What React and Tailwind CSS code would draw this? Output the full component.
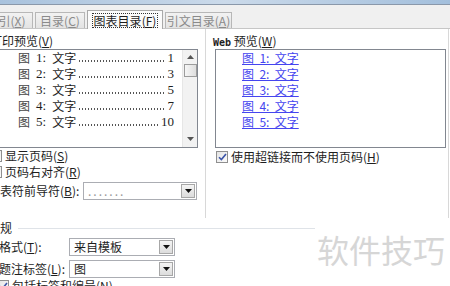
import React from "react";

const entries = [
  { n: 1, page: "1" },
  { n: 2, page: "3" },
  { n: 3, page: "5" },
  { n: 4, page: "7" },
  { n: 5, page: "10" },
];

const Key = ({ k }) => (
  <>
    (<span className="underline">{k}</span>)
  </>
);

const Check = ({ checked }) => (
  <span className="flex-none w-[12px] h-[12px] border border-[#8f8f8f] bg-gradient-to-br from-[#e4e4e4] to-[#fbfbfb] flex items-center justify-center">
    {checked && (
      <svg width="9" height="8" viewBox="0 0 9 8">
        <path d="M1 4.2 L3.4 6.6 L8 1" fill="none" stroke="#3b54a8" strokeWidth="1.6" />
      </svg>
    )}
  </span>
);

const Select = ({ value, className, dim }) => (
  <div className={`flex items-center bg-white border border-[#abadb3] ${className}`}>
    <span className={`flex-1 min-w-0 pl-[4px] leading-[14px] whitespace-nowrap ${dim ? "text-[#9a9a9a] tracking-[2px]" : ""}`}>
      {value}
    </span>
    <span className="flex-none w-[14px] h-[14px] mr-px border border-[#a7a7a7] bg-gradient-to-b from-[#f4f4f4] to-[#dcdcdc] flex items-center justify-center">
      <svg width="7" height="4" viewBox="0 0 7 4">
        <polygon points="0,0 7,0 3.5,4" fill="#111" />
      </svg>
    </span>
  </div>
);

const tabs = [
  { label: "索引", k: "X", w: "w-[54px] ml-[-21px]" },
  { label: "目录", k: "C", w: "w-[50px]" },
  { label: "图表目录", k: "F", w: "w-[76px]", active: true },
  { label: "引文目录", k: "A", w: "w-[67px]" },
];

export default function App() {
  return (
    <div className="relative w-[450px] h-[286px] overflow-hidden bg-white text-[12px] text-[#1e1e1e] font-['Noto_Sans_CJK_SC',sans-serif]">
      <div className="h-[4px] bg-gradient-to-r from-[#a8c2dd] via-[#cbdaea] to-[#a3bfdc]" />
      <div className="h-px bg-[#8a98aa]" />

      {/* tab strip */}
      <div className="h-[24px] bg-[#f0f0f0] border-b border-[#c6c6c6] flex items-end gap-[2px]">
        {tabs.map((t) =>
          t.active ? (
            <div
              key={t.k}
              className={`${t.w} flex-none h-[19px] mb-[-1px] bg-[#fbfbfb] border-x border-t border-[#a9a9a9] flex items-center justify-center`}
            >
              <span className="border border-dotted border-[#333] px-px leading-[13px] whitespace-nowrap">
                {t.label}
                <Key k={t.k} />
              </span>
            </div>
          ) : (
            <div
              key={t.k}
              className={`${t.w} flex-none h-[16px] bg-gradient-to-b from-[#f2f2f2] to-[#e3e3e3] border-x border-t border-[#b7b7b7] flex items-center justify-center text-[#8a8a8a] leading-[14px] whitespace-nowrap`}
            >
              {t.label}
              <Key k={t.k} />
            </div>
          )
        )}
      </div>

      {/* body */}
      <div className="flex h-[189px] ml-[-10px]">
        <div className="w-[209px] flex-none flex flex-col">
          <div className="mt-[5px] h-[14px] leading-[14px] whitespace-nowrap">
            打印预览<Key k="V" />
          </div>
          <div className="mt-px w-[208px] h-[99px] border border-[#828790] bg-white flex">
            <div className="flex-1 min-w-0 flex flex-col pl-[27px] pr-[8px]">
              {entries.map((e) => (
                <div key={e.n} className="h-[16px] flex items-center leading-[16px] whitespace-nowrap">
                  <span className="flex-none text-[#444]">图</span>
                  <span className="flex-none ml-[6px] font-['Liberation_Serif',serif] text-[13px]">{e.n}:</span>
                  <span className="flex-none ml-[6px]">文字</span>
                  {/* dot leader */}
                  <span className="flex-1 min-w-0 self-end mb-[4px] mx-[2px] h-[2px] bg-[radial-gradient(circle,#555_0.6px,transparent_0.9px)] bg-[length:3px_2px] bg-repeat-x" />
                  <span className="flex-none font-['Liberation_Serif',serif] text-[13px]">{e.page}</span>
                </div>
              ))}
            </div>
            <div className="w-[15px] flex-none bg-[#f2f2f2] border-l border-[#e6e6e6] flex flex-col items-center">
              <svg className="mt-[5px]" width="7" height="4" viewBox="0 0 7 4">
                <polygon points="3.5,0 7,4 0,4" fill="#555" />
              </svg>
              <div className="mt-[5px] w-[13px] h-[13px] border border-[#9c9c9c] bg-gradient-to-r from-[#f6f6f6] to-[#dedede]" />
              <div className="flex-1" />
              <svg className="mb-[6px]" width="7" height="4" viewBox="0 0 7 4">
                <polygon points="0,0 7,0 3.5,4" fill="#555" />
              </svg>
            </div>
          </div>
          <div className="mt-px h-[14px] flex items-center gap-[3px] leading-[14px]">
            <Check />
            <span>
              显示页码<Key k="S" />
            </span>
          </div>
          <div className="mt-[2px] h-[14px] flex items-center gap-[3px] leading-[14px]">
            <Check />
            <span>
              页码右对齐<Key k="R" />
            </span>
          </div>
          <div className="mt-[3px] w-[207px] h-[18px] flex items-center">
            <span className="ml-[-2px] whitespace-nowrap leading-[14px]">
              制表符前导符<Key k="B" />:
            </span>
            <Select value="......." dim className="ml-auto w-[114px] h-[18px]" />
          </div>
        </div>

        <div className="ml-[6px] w-[244px] flex-none border-l border-r border-[#d8d8d8] flex flex-col">
          <div className="mt-[5px] pl-[7px] h-[14px] leading-[14px] whitespace-nowrap">
            <span className="font-['DejaVu_Sans_Mono',monospace] text-[10px] font-bold">Web</span> 预览<Key k="W" />
          </div>
          <div className="mt-px ml-[9px] w-[231px] h-[99px] border border-[#828790] bg-white flex flex-col pl-[26px]">
            {entries.map((e) => (
              <div key={e.n} className="h-[16px] leading-[16px] flex">
                <span className="underline text-[#4545ef] whitespace-nowrap">
                  {`图  ${e.n}:  文字`.replace(/ /g, "\u00a0")}
                </span>
              </div>
            ))}
          </div>
          <div className="mt-[2px] ml-[10px] h-[14px] flex items-center gap-[3px] leading-[14px]">
            <Check checked />
            <span>
              使用超链接而不使用页码<Key k="H" />
            </span>
          </div>
        </div>
      </div>

      {/* general */}
      <div className="flex flex-col">
        <div className="mt-[3px] ml-[-12px] w-[327px] h-[14px] flex items-center leading-[14px]">
          <span>常规</span>
          <div className="flex-1 ml-[6px] h-px bg-[#dfe3e8]" />
        </div>
        <div className="mt-[3px] h-[18px] flex items-center">
          <span className="w-[70px] ml-[-1px] flex-none whitespace-nowrap leading-[14px]">
            格式<Key k="T" />:
          </span>
          <Select value="来自模板" className="w-[106px] h-[18px]" />
        </div>
        <div className="mt-[4px] h-[18px] flex items-center">
          <span className="w-[70px] ml-[-1px] flex-none whitespace-nowrap leading-[14px]">
            题注标签<Key k="L" />:
          </span>
          <Select value="图" className="w-[106px] h-[18px]" />
        </div>
        <div className="mt-px ml-[-3px] h-[14px] flex items-center gap-[3px] leading-[14px]">
          <Check checked />
          <span>
            包括标签和编号<Key k="N" />
          </span>
        </div>
      </div>

      <div className="absolute left-[317px] top-[231px] text-[32px] leading-[36px] text-[#d6d6d6] whitespace-nowrap">
        软件技巧
      </div>
    </div>
  );
}
